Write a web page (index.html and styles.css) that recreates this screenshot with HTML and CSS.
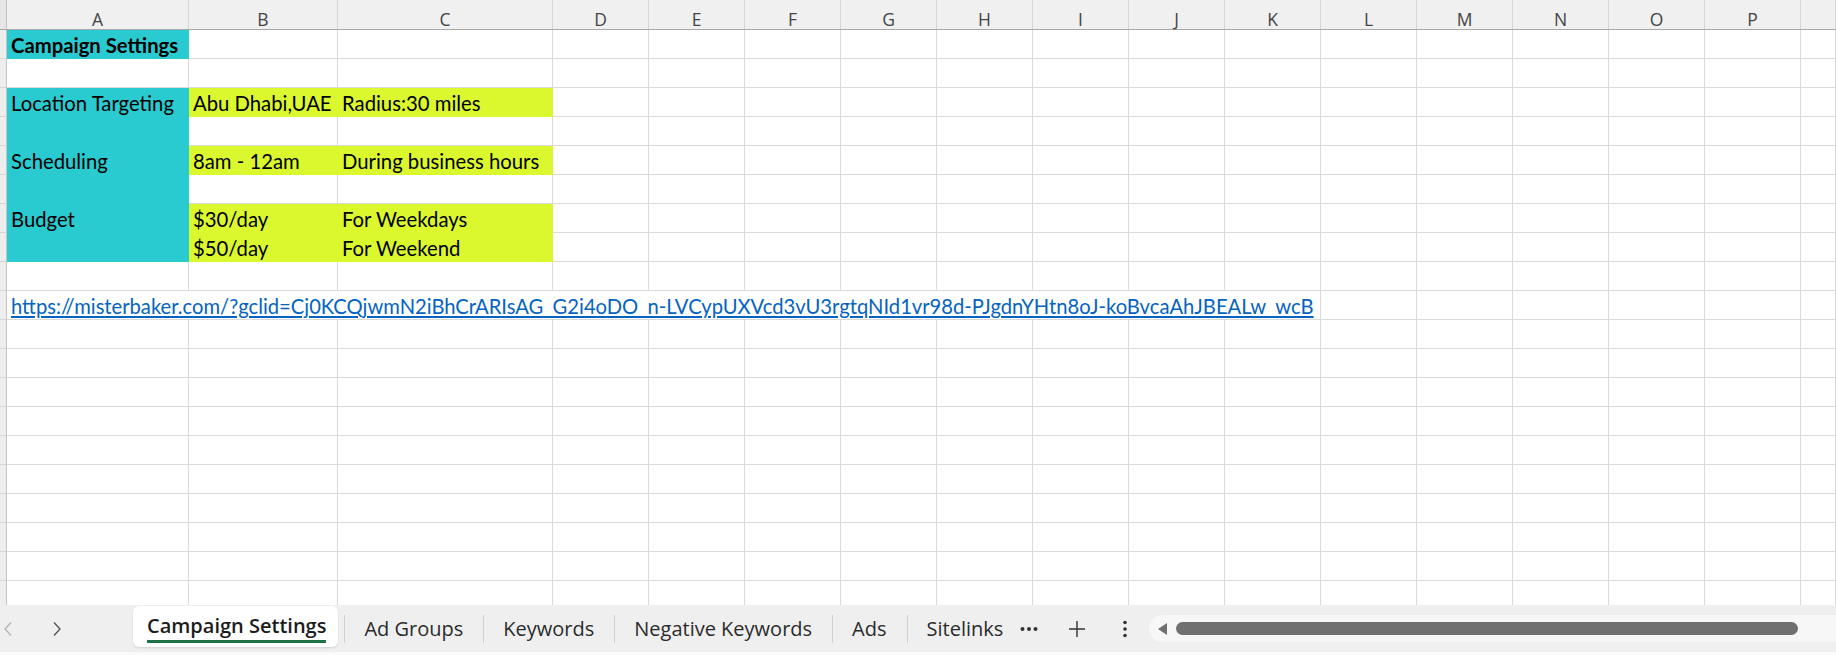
FILE: index.html
```html
<!DOCTYPE html>
<html lang="en">
<head>
<meta charset="utf-8">
<title>Campaign Settings</title>
<link rel="stylesheet" href="styles.css">
</head>
<body>
<div class="app">
  <div class="sheet">
    <div class="colhead"><span class="rh"></span><span>A</span><span>B</span><span>C</span><span>D</span><span>E</span><span>F</span><span>G</span><span>H</span><span>I</span><span>J</span><span>K</span><span>L</span><span>M</span><span>N</span><span>O</span><span>P</span><span></span></div>
    <div class="row"><span class="rh"></span><span class="teal bold">Campaign Settings</span><span></span><span></span><span></span><span></span><span></span><span></span><span></span><span></span><span></span><span></span><span></span><span></span><span></span><span></span><span></span><span></span></div>
    <div class="row"><span class="rh"></span><span></span><span></span><span></span><span></span><span></span><span></span><span></span><span></span><span></span><span></span><span></span><span></span><span></span><span></span><span></span><span></span><span></span></div>
    <div class="row"><span class="rh"></span><span class="teal">Location Targeting</span><span class="lime">Abu Dhabi,UAE</span><span class="lime">Radius:30 miles</span><span></span><span></span><span></span><span></span><span></span><span></span><span></span><span></span><span></span><span></span><span></span><span></span><span></span><span></span></div>
    <div class="row"><span class="rh"></span><span class="teal"></span><span></span><span></span><span></span><span></span><span></span><span></span><span></span><span></span><span></span><span></span><span></span><span></span><span></span><span></span><span></span><span></span></div>
    <div class="row"><span class="rh"></span><span class="teal">Scheduling</span><span class="lime">8am - 12am</span><span class="lime">During business hours</span><span></span><span></span><span></span><span></span><span></span><span></span><span></span><span></span><span></span><span></span><span></span><span></span><span></span><span></span></div>
    <div class="row"><span class="rh"></span><span class="teal"></span><span></span><span></span><span></span><span></span><span></span><span></span><span></span><span></span><span></span><span></span><span></span><span></span><span></span><span></span><span></span><span></span></div>
    <div class="row"><span class="rh"></span><span class="teal">Budget</span><span class="lime">$30/day</span><span class="lime">For Weekdays</span><span></span><span></span><span></span><span></span><span></span><span></span><span></span><span></span><span></span><span></span><span></span><span></span><span></span><span></span></div>
    <div class="row"><span class="rh"></span><span class="teal"></span><span class="lime">$50/day</span><span class="lime">For Weekend</span><span></span><span></span><span></span><span></span><span></span><span></span><span></span><span></span><span></span><span></span><span></span><span></span><span></span><span></span></div>
    <div class="row"><span class="rh"></span><span></span><span></span><span></span><span></span><span></span><span></span><span></span><span></span><span></span><span></span><span></span><span></span><span></span><span></span><span></span><span></span><span></span></div>
    <div class="row"><span class="rh"></span><span class="link-cell"><a class="link" href="#">https://misterbaker.com/?gclid=Cj0KCQjwmN2iBhCrARIsAG_G2i4oDO_n-LVCypUXVcd3vU3rgtqNId1vr98d-PJgdnYHtn8oJ-koBvcaAhJBEALw_wcB</a></span><span></span><span></span><span></span><span></span><span></span><span></span></div>
    <div class="row"><span class="rh"></span><span></span><span></span><span></span><span></span><span></span><span></span><span></span><span></span><span></span><span></span><span></span><span></span><span></span><span></span><span></span><span></span><span></span></div>
    <div class="row"><span class="rh"></span><span></span><span></span><span></span><span></span><span></span><span></span><span></span><span></span><span></span><span></span><span></span><span></span><span></span><span></span><span></span><span></span><span></span></div>
    <div class="row"><span class="rh"></span><span></span><span></span><span></span><span></span><span></span><span></span><span></span><span></span><span></span><span></span><span></span><span></span><span></span><span></span><span></span><span></span><span></span></div>
    <div class="row"><span class="rh"></span><span></span><span></span><span></span><span></span><span></span><span></span><span></span><span></span><span></span><span></span><span></span><span></span><span></span><span></span><span></span><span></span><span></span></div>
    <div class="row"><span class="rh"></span><span></span><span></span><span></span><span></span><span></span><span></span><span></span><span></span><span></span><span></span><span></span><span></span><span></span><span></span><span></span><span></span><span></span></div>
    <div class="row"><span class="rh"></span><span></span><span></span><span></span><span></span><span></span><span></span><span></span><span></span><span></span><span></span><span></span><span></span><span></span><span></span><span></span><span></span><span></span></div>
    <div class="row"><span class="rh"></span><span></span><span></span><span></span><span></span><span></span><span></span><span></span><span></span><span></span><span></span><span></span><span></span><span></span><span></span><span></span><span></span><span></span></div>
    <div class="row"><span class="rh"></span><span></span><span></span><span></span><span></span><span></span><span></span><span></span><span></span><span></span><span></span><span></span><span></span><span></span><span></span><span></span><span></span><span></span></div>
    <div class="row"><span class="rh"></span><span></span><span></span><span></span><span></span><span></span><span></span><span></span><span></span><span></span><span></span><span></span><span></span><span></span><span></span><span></span><span></span><span></span></div>
    <div class="row"><span class="rh"></span><span></span><span></span><span></span><span></span><span></span><span></span><span></span><span></span><span></span><span></span><span></span><span></span><span></span><span></span><span></span><span></span><span></span></div>
  </div>
  <div class="tabbar">
    <div class="nav">
      <svg class="chev" width="10" height="16" viewBox="0 0 10 16"><path d="M8 1.5 L2 8 L8 14.5" fill="none" stroke="#b5b5b5" stroke-width="1.3"/></svg>
      <svg class="chev" width="10" height="16" viewBox="0 0 10 16"><path d="M2 1.5 L8 8 L2 14.5" fill="none" stroke="#505050" stroke-width="1.3"/></svg>
    </div>
    <div class="tab active"><span class="tab-label">Campaign Settings</span></div>
    <div class="tab first">Ad Groups</div>
    <div class="tab">Keywords</div>
    <div class="tab">Negative Keywords</div>
    <div class="tab">Ads</div>
    <div class="tab last">Sitelinks</div>
    <div class="tool"><svg width="18" height="6" viewBox="0 0 18 6"><circle cx="2.5" cy="3" r="2" fill="#333"/><circle cx="9" cy="3" r="2" fill="#333"/><circle cx="15.5" cy="3" r="2" fill="#333"/></svg></div>
    <div class="tool"><svg width="18" height="18" viewBox="0 0 18 18"><path d="M9 1 V17 M1 9 H17" stroke="#333" stroke-width="1.4" fill="none"/></svg></div>
    <div class="tool"><svg width="6" height="18" viewBox="0 0 6 18"><circle cx="3" cy="2.5" r="1.8" fill="#333"/><circle cx="3" cy="9" r="1.8" fill="#333"/><circle cx="3" cy="15.5" r="1.8" fill="#333"/></svg></div>
    <div class="hscroll">
      <svg width="9" height="12" viewBox="0 0 9 12"><path d="M9 0 L0 6 L9 12 Z" fill="#6f6f6f"/></svg>
      <div class="thumb"></div>
    </div>
  </div>
  <div class="bottomstrip"></div>
</div>
</body>
</html>
```
FILE: styles.css
```css
* { box-sizing: border-box; }
html, body { margin: 0; padding: 0; background: #fff; }
body { width: 1836px; height: 655px; overflow: hidden; }
.app { display: flex; flex-direction: column; height: 655px; }

.sheet { height: 605px; overflow: hidden; flex: none; }

.colhead, .row {
  display: grid;
  grid-template-columns: 7px 182px 149px 215px repeat(13, 96px) 35px;
}

.colhead { height: 30px; background: #f0f0f0; border-bottom: 1px solid #a8a8a8; }
.colhead > span {
  border-right: 1px solid #d4d4d4;
  display: flex; align-items: flex-end; justify-content: center;
  font-family: "Open Sans", "Noto Sans", sans-serif;
  font-size: 17.5px; line-height: 20px; color: #444;
  padding-bottom: 0;
}
.colhead > span.rh { background: #e6e6e6; border-right-color: #c4c4c4; }

.row { height: 29px; }
.row > span {
  border-right: 1px solid #dadada;
  border-bottom: 1px solid #dadada;
  display: flex; align-items: flex-end;
  padding: 0 0 3px 4px;
  font-family: Lato, "Liberation Sans", sans-serif;
  font-size: 20.3px; line-height: 20px; color: #000;
  white-space: nowrap;
  min-width: 0;
}
.row > span.rh { background: #eeeeee; border-right-color: #c4c4c4; border-bottom-color: #d6d6d6; padding: 0; }
.row > span.teal { background: #29cbd1; border-color: transparent; }
.row > span.lime { background: #dbf82f; border-color: transparent; }
.row > span.bold { font-weight: 700; }
.row > span.link-cell { grid-column: 2 / 13; font-size: 20.2px; }
.link { color: #0563c1; text-decoration: underline; text-underline-offset: 2px; }

.tabbar {
  height: 47px; flex: none;
  background: #efefef;
  display: flex; align-items: center;
  font-family: "Open Sans", "Noto Sans", sans-serif;
  font-size: 20px; color: #2b2b2b;
}
.nav { width: 133px; align-self: stretch; display: flex; align-items: center; gap: 39px; padding-left: 3px; }
.tab { height: 28px; display: flex; align-items: center; padding: 0 20px 0 19px; border-left: 1px solid #d0d0d0; white-space: nowrap; }
.tab.active {
  align-self: flex-start; margin-top: 1px; height: 41px; border-left: none;
  background: #fff; border-radius: 6px; padding: 0 12px 0 14px;
  box-shadow: 0 1px 2px rgba(0,0,0,0.12);
  color: #1c1c1c; font-weight: 600;
}
.tab-label { border-bottom: 3px solid #1e7145; padding-top: 2px; line-height: 28px; }
.tab.first { margin-left: 6px; }
.tab.last { padding-right: 2px; }
.tool { width: 48px; display: flex; justify-content: center; align-items: center; height: 30px; }
.hscroll {
  flex: 1; height: 27px; background: #f7f7f7; border-radius: 14px 0 0 14px;
  display: flex; align-items: center; padding-left: 9px; gap: 9px;
}
.thumb { width: 622px; height: 13px; border-radius: 7px; background: #707070; }
.bottomstrip { height: 3px; background: #fafafa; }
```
